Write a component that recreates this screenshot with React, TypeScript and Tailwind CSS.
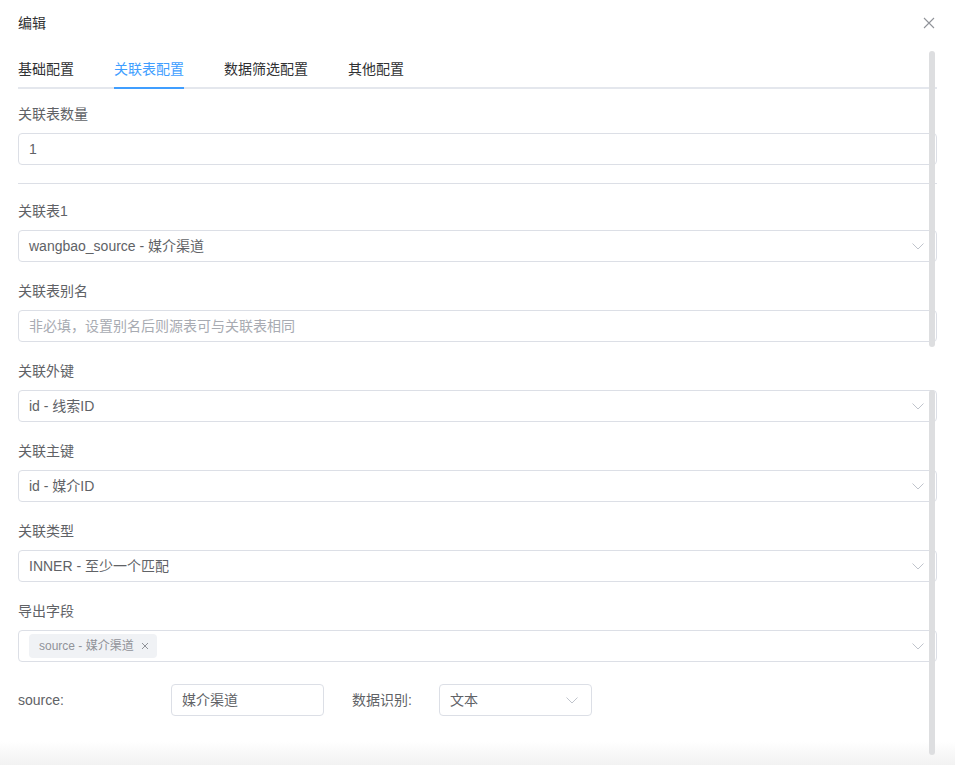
import React from "react";

const font = { fontFamily: '"Liberation Sans", "Noto Sans CJK SC", sans-serif' };

const tabs = ["基础配置", "关联表配置", "数据筛选配置", "其他配置"];

function Chevron() {
  return (
    <svg width="12" height="7" viewBox="0 0 12 7" className="shrink-0">
      <polyline points="0.5,0.5 6,6 11.5,0.5" fill="none" stroke="#c0c4cc" strokeWidth="1" />
    </svg>
  );
}

function Label({ children }: { children: React.ReactNode }) {
  return <div className="mb-2 text-[14px] leading-[22px] text-[#606266]">{children}</div>;
}

function Box({
  children,
  select,
  className = "",
}: {
  children?: React.ReactNode;
  select?: boolean;
  className?: string;
}) {
  return (
    <div
      className={
        "flex h-8 items-center justify-between rounded border border-[#dcdfe6] bg-white pl-[10px] pr-[12px] text-[14px] text-[#606266] " +
        className
      }
    >
      <div className="flex min-w-0 items-center">{children}</div>
      {select && <Chevron />}
    </div>
  );
}

function Field({
  label,
  children,
}: {
  label: string;
  children: React.ReactNode;
}) {
  return (
    <div className="mb-[18px]">
      <Label>{label}</Label>
      {children}
    </div>
  );
}

export default function App() {
  return (
    <div style={font} className="relative h-[765px] w-[955px] overflow-hidden bg-white px-[18px]">
      {/* header */}
      <div className="flex h-[34px] items-end justify-between">
        <span className="text-[14px] leading-[22px] text-[#303133]">编辑</span>
        <svg width="12" height="12" viewBox="0 0 12 12" className="mb-[5px] mr-[2px]">
          <path d="M1 1 L11 11 M11 1 L1 11" stroke="#909399" strokeWidth="1.1" />
        </svg>
      </div>

      {/* tabs */}
      <div className="mt-[15px] flex h-10 border-b-2 border-[#e4e7ed]">
        {tabs.map((t, i) => (
          <div key={t} className={"relative h-10 " + (i === 0 ? "pr-5" : "px-5")}>
            <span
              className={
                "relative block h-10 text-[14px] leading-10 " +
                (i === 1 ? "text-[#409eff]" : "text-[#303133]")
              }
            >
              {t}
              {i === 1 && <span className="absolute bottom-0 left-0 right-0 h-[2px] bg-[#409eff]" />}
            </span>
          </div>
        ))}
      </div>

      {/* form */}
      <div className="mt-[14px]">
        <Field label="关联表数量">
          <Box>1</Box>
        </Field>
        <div className="mb-4 h-px bg-[#dcdfe6]" />
        <Field label="关联表1">
          <Box select>wangbao_source - 媒介渠道</Box>
        </Field>
        <Field label="关联表别名">
          <Box>
            <span className="text-[#a8abb2]">非必填，设置别名后则源表可与关联表相同</span>
          </Box>
        </Field>
        <Field label="关联外键">
          <Box select>id - 线索ID</Box>
        </Field>
        <Field label="关联主键">
          <Box select>id - 媒介ID</Box>
        </Field>
        <Field label="关联类型">
          <Box select>INNER - 至少一个匹配</Box>
        </Field>
        <div>
          <Label>导出字段</Label>
          <Box select>
            <span className="flex h-6 items-center gap-[7px] rounded bg-[#f0f2f5] pl-[10px] pr-[8px] text-[12px] text-[#909399]">
              source - 媒介渠道
              <svg width="8" height="8" viewBox="0 0 8 8">
                <path d="M1 1 L7 7 M7 1 L1 7" stroke="#909399" strokeWidth="1" />
              </svg>
            </span>
          </Box>
        </div>

        <div className="mt-[22px] flex items-center">
          <span className="w-[153px] text-[14px] text-[#606266]">source:</span>
          <Box className="w-[153px]">媒介渠道</Box>
          <span className="ml-[28px] w-[87px] text-[14px] text-[#606266]">数据识别:</span>
          <Box select className="w-[153px] pr-[13px]">
            文本
          </Box>
        </div>
      </div>

      {/* footer shade */}
      <div className="pointer-events-none absolute bottom-0 left-0 h-[24px] w-full bg-gradient-to-b from-white to-[#f2f2f2]" />

      {/* scrollbars */}
      <div className="absolute left-[929px] top-[51px] h-[296px] w-[6px] rounded-full bg-[#dddee0]" />
      <div className="absolute left-[929px] top-[390px] h-[365px] w-[6px] rounded-full bg-[#dddee0]" />
    </div>
  );
}
